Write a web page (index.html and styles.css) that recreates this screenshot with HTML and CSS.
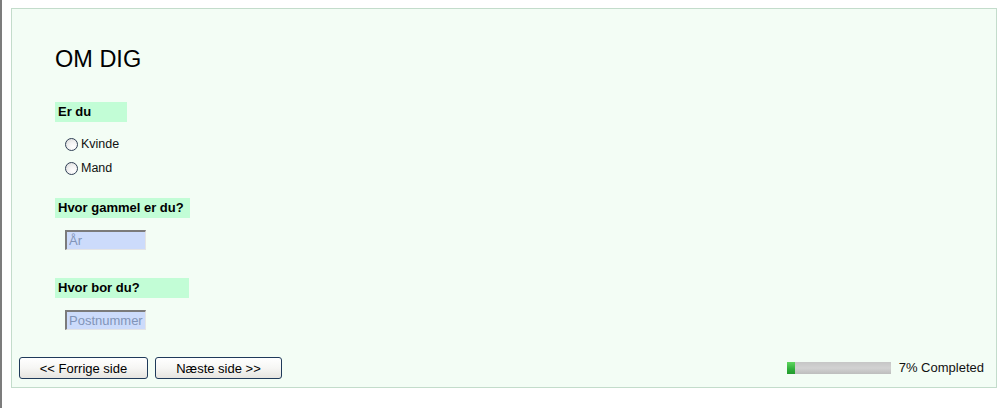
FILE: index.html
```html
<!DOCTYPE html>
<html lang="da">
<head>
<meta charset="utf-8">
<title>Om dig</title>
<link rel="stylesheet" href="styles.css">
</head>
<body>
<div class="frame">
  <form class="panel">
    <div class="content">
      <h1 class="title">OM DIG</h1>

      <div class="question q-gender">Er du</div>
      <div class="options">
        <label class="option"><input type="radio" name="gender" class="radio"><span>Kvinde</span></label>
        <label class="option"><input type="radio" name="gender" class="radio"><span>Mand</span></label>
      </div>

      <div class="question q-age">Hvor gammel er du?</div>
      <div class="field"><input type="text" class="textbox" placeholder="År"></div>

      <div class="question q-home">Hvor bor du?</div>
      <div class="field"><input type="text" class="textbox" placeholder="Postnummer"></div>
    </div>

    <div class="footer">
      <div class="nav">
        <button type="button" class="btn btn-prev">&lt;&lt; Forrige side</button>
        <button type="button" class="btn btn-next">Næste side &gt;&gt;</button>
      </div>
      <div class="progress">
        <div class="bar"><div class="fill" style="width: 8px"></div></div>
        <span class="progress-text">7% Completed</span>
      </div>
    </div>
  </form>
</div>
</body>
</html>
```

FILE: styles.css
```css
html, body {
  margin: 0;
  padding: 0;
  background: #ffffff;
}

body {
  font-family: "Liberation Sans", Arial, sans-serif;
  color: #000;
}

.frame {
  height: 408px;
  box-sizing: border-box;
  border-left: 2px solid #7c7c7c;
  padding: 8px 8px 0 9px;
}

.panel {
  height: 380px;
  box-sizing: border-box;
  border: 1px solid #c3dccb;
  background: #f3fdf5;
  display: flex;
  flex-direction: column;
}

.content {
  padding-left: 43px;
  display: flex;
  flex-direction: column;
  align-items: flex-start;
}

.title {
  margin: 37px 0 0 0;
  font-size: 23.5px;
  line-height: 26px;
  font-weight: normal;
}

.question {
  height: 20px;
  line-height: 20px;
  font-size: 13px;
  font-weight: bold;
  background: #c2fdd6;
  padding-left: 3px;
  box-sizing: border-box;
}

.q-gender { width: 72px; margin-top: 30px; }
.q-age { width: 135px; margin-top: 18px; }
.q-home { width: 134px; margin-top: 28px; }

.options {
  margin-top: 10px;
  padding-left: 10px;
  display: flex;
  flex-direction: column;
}

.option {
  height: 24px;
  display: flex;
  align-items: center;
  gap: 3px;
  font-size: 12.5px;
  color: #111;
}

.radio {
  appearance: none;
  -webkit-appearance: none;
  margin: 0;
  width: 13px;
  height: 13px;
  border-radius: 50%;
  border: 1px solid #2f3f55;
  background: radial-gradient(circle at 65% 70%, #ffffff 0%, #f2f2f2 45%, #d6d6d6 100%);
  box-sizing: border-box;
}

.field {
  margin-top: 12px;
  padding-left: 10px;
}

.textbox {
  display: block;
  width: 81px;
  height: 20px;
  box-sizing: border-box;
  margin: 0;
  padding: 0 2px;
  border-style: solid;
  border-width: 2px 1px 1px 2px;
  border-color: #7b7b7b #e4e4e4 #e4e4e4 #7b7b7b;
  background: #ccdbfb;
  font-family: "Liberation Sans", Arial, sans-serif;
  font-size: 13px;
  outline: none;
}

.textbox::placeholder {
  color: #8194b8;
  opacity: 1;
}

.footer {
  margin-top: auto;
  padding: 0 12px 8px 7px;
  display: flex;
  align-items: center;
  justify-content: space-between;
}

.nav {
  display: flex;
  gap: 7px;
}

.btn {
  height: 22px;
  margin: 0;
  padding: 0;
  border: 1px solid #1f3a5a;
  border-radius: 3px;
  background: linear-gradient(#ffffff 0%, #f6f6f4 50%, #e6e4df 100%);
  font-family: "Liberation Sans", Arial, sans-serif;
  font-size: 13px;
  color: #000;
}

.btn-prev { width: 129px; }
.btn-next { width: 127px; }

.progress {
  display: flex;
  align-items: center;
  gap: 8px;
}

.bar {
  width: 104px;
  height: 12px;
  background: linear-gradient(#c6c6c6 0%, #d2d2d2 50%, #bdbdbd 100%);
  display: flex;
}

.fill {
  height: 100%;
  background: linear-gradient(#5fd65f 0%, #2fae3a 60%, #239b2e 100%);
}

.progress-text {
  font-size: 13px;
  color: #111;
  line-height: 16px;
}
```
